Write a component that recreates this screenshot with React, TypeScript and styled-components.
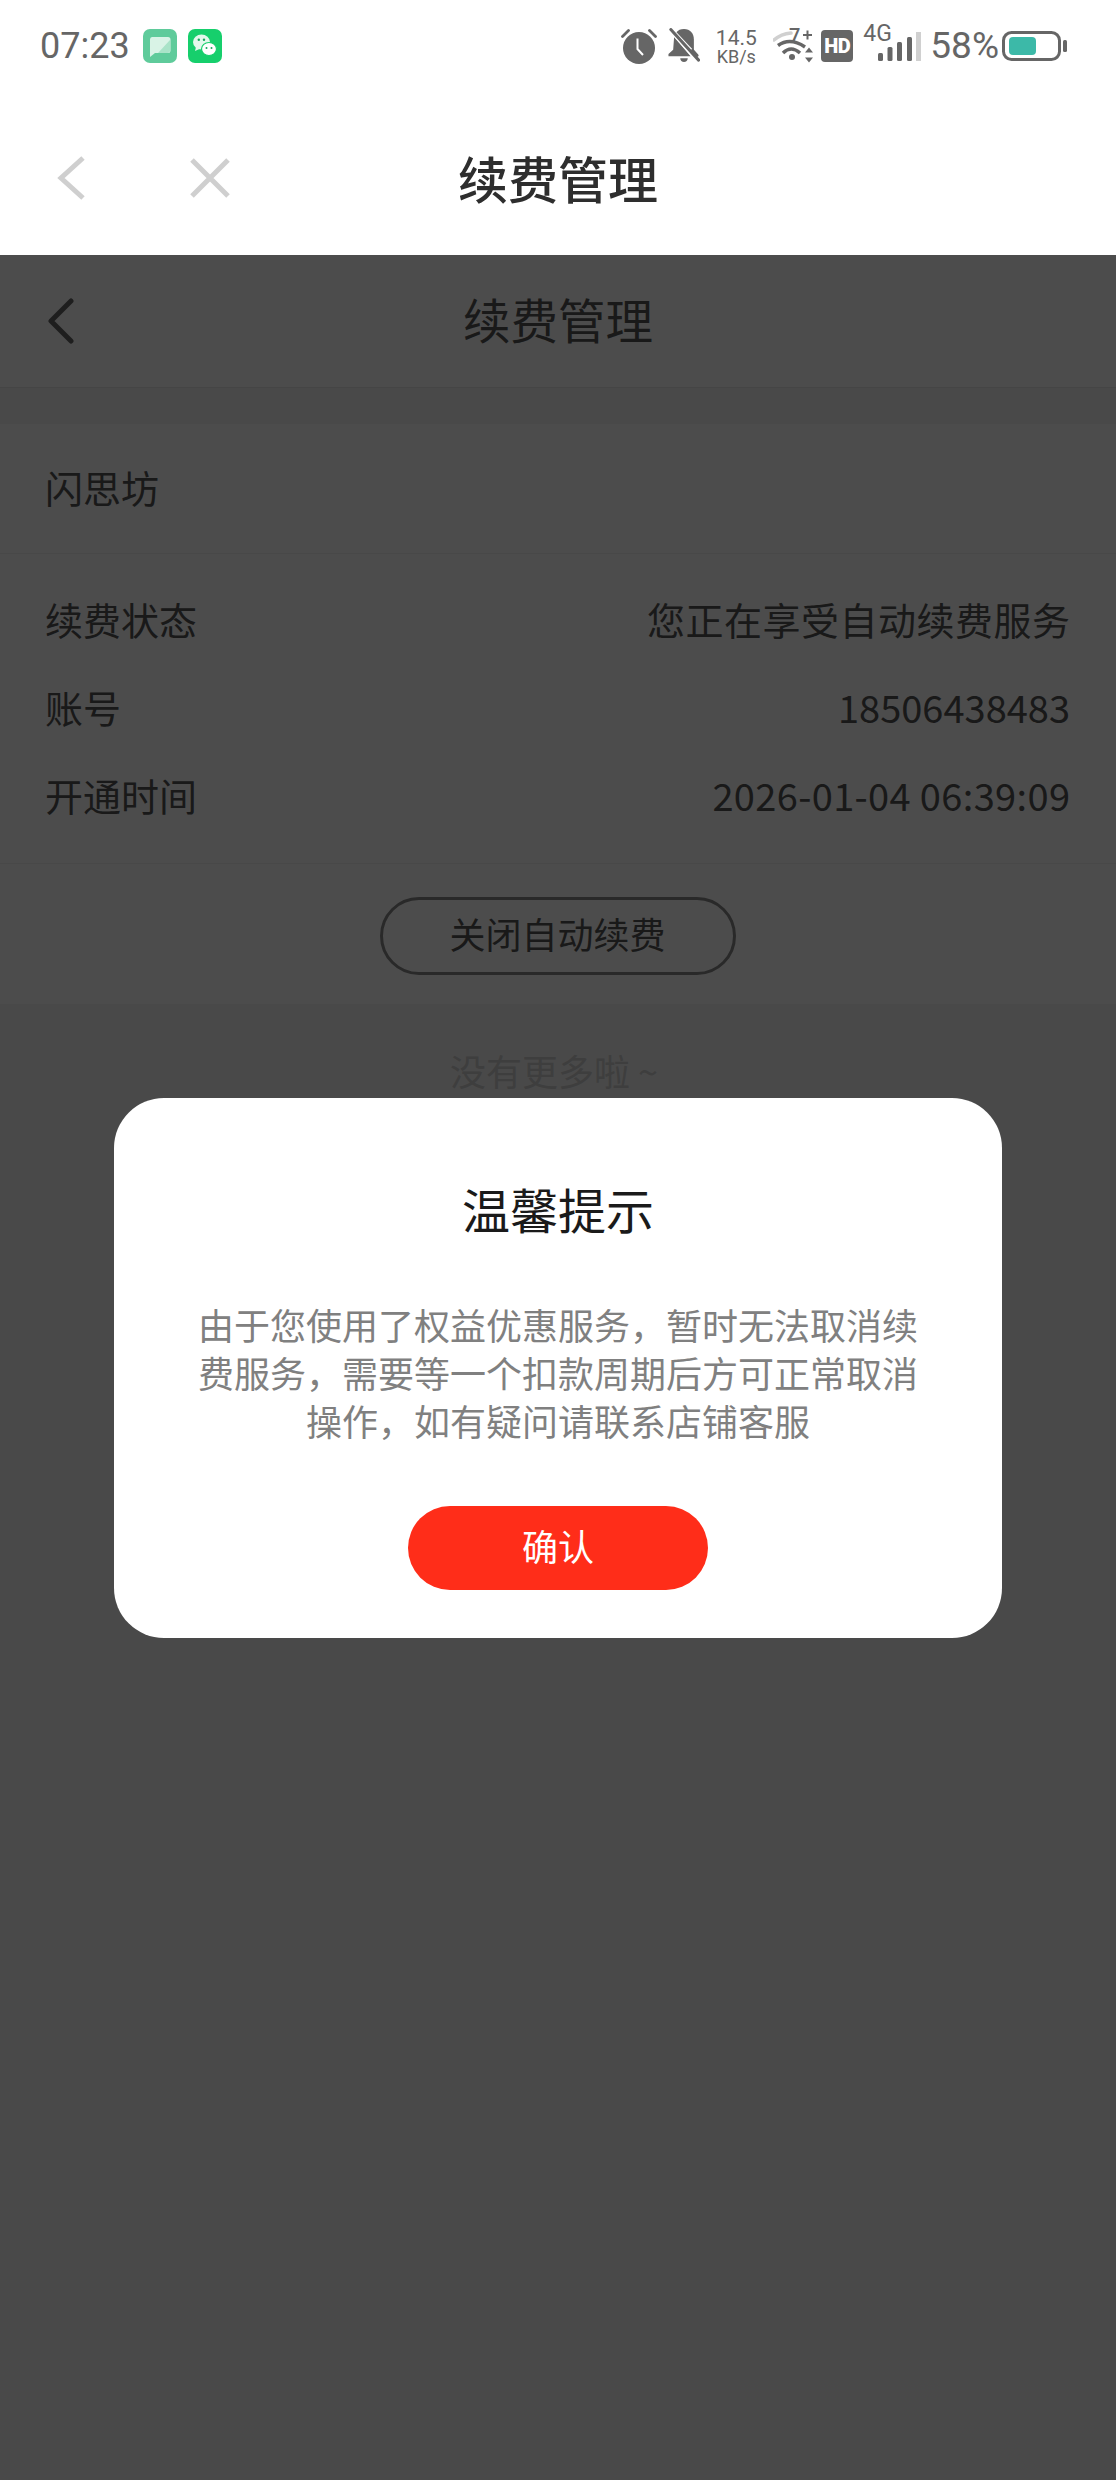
import React from 'react';
import styled, { createGlobalStyle } from 'styled-components';

const GlobalStyle = createGlobalStyle`
  html, body {
    margin: 0;
    padding: 0;
    background: #fff;
  }
  * {
    box-sizing: border-box;
  }
`;

const Screen = styled.div`
  width: 1116px;
  height: 2480px;
  display: flex;
  flex-direction: column;
  overflow: hidden;
  background: #fff;
  font-family: 'Noto Sans CJK SC', 'Noto Sans', sans-serif;
`;

const StatusBar = styled.div`
  height: 100px;
  flex: none;
  display: flex;
  justify-content: space-between;
  align-items: center;
  padding: 0 48px 8px 40px;
  color: #666;
  font-family: Roboto, sans-serif;
  font-weight: 400;
`;

const StatusGroup = styled.div`
  display: flex;
  align-items: center;
`;

const Clock = styled.span`
  font-size: 36px;
  line-height: 40px;
  margin-right: 13px;
`;

const StatusSlot = styled.div<{ $left?: number }>`
  display: flex;
  align-items: center;
  margin-left: ${(p) => p.$left ?? 0}px;
`;

const NetSpeed = styled.div`
  width: 40px;
  display: flex;
  flex-direction: column;
  align-items: center;
  color: #666;
`;

const NetValue = styled.span`
  font-size: 21px;
  line-height: 20px;
`;

const NetUnit = styled.span`
  font-size: 18px;
  line-height: 17px;
  white-space: nowrap;
`;

const HdBadge = styled.span`
  width: 32px;
  height: 32px;
  border-radius: 4px;
  background: #666;
  color: #fff;
  display: flex;
  align-items: center;
  justify-content: center;
  font-size: 20px;
  font-weight: 900;
  letter-spacing: -0.5px;
`;

const SignalWrap = styled.div`
  position: relative;
  width: 58px;
  height: 30px;
  display: flex;
  justify-content: flex-end;
  align-items: flex-end;
`;

const NetType = styled.span`
  position: absolute;
  left: 0;
  top: -8px;
  font-size: 23px;
  line-height: 22px;
`;

const Percent = styled.span`
  font-size: 37px;
  line-height: 40px;
`;

const NavBar = styled.div`
  height: 155px;
  flex: none;
  display: grid;
  grid-template-columns: 1fr auto 1fr;
  align-items: center;
`;

const NavIcons = styled.div`
  display: flex;
  align-items: center;
  gap: 105px;
  padding-left: 57px;
`;

const NavTitle = styled.div`
  font-size: 50px;
  line-height: 60px;
  font-weight: 500;
  color: #2e2e2e;
  padding-bottom: 2px;
`;

const Page = styled.div`
  position: relative;
  flex: 1;
  background: #f5f5f5;
`;

const PageHeader = styled.div`
  height: 133px;
  display: grid;
  grid-template-columns: 1fr auto 1fr;
  align-items: center;
  background: #fff;
  border-bottom: 1px solid #e8e8e8;
`;

const PageBack = styled.div`
  padding-left: 48px;
`;

const PageTitle = styled.div`
  font-size: 47.5px;
  line-height: 60px;
  color: #555;
  padding-bottom: 5px;
`;

const Strip = styled.div`
  height: 36px;
`;

const Section = styled.div<{ $height: number }>`
  height: ${(p) => p.$height}px;
  background: #fff;
  border-bottom: 1px solid #f0f0f0;
  padding: 0 46px 0 45px;
  display: flex;
  flex-direction: column;
  justify-content: center;
`;

const ActionSection = styled(Section)`
  align-items: center;
  padding-top: 3px;
  border-bottom: none;
`;

const Row = styled.div`
  height: 88px;
  display: flex;
  justify-content: space-between;
  align-items: center;
  font-size: 38px;
  color: #555;
  padding-bottom: 5px;
`;

const RowValue = styled.span<{ $spacing: number }>`
  letter-spacing: ${(p) => p.$spacing}px;
  margin-right: ${(p) => -p.$spacing}px;
`;

const ShopName = styled.div`
  font-size: 38px;
  color: #555;
  padding-bottom: 5px;
`;

const OutlineButton = styled.div`
  width: 356px;
  height: 78px;
  border: 3px solid #8a8a8a;
  border-radius: 39px;
  display: flex;
  align-items: center;
  justify-content: center;
  font-size: 36px;
  color: #555;
  padding-bottom: 5px;
`;

const NoMore = styled.div`
  margin-top: 41px;
  padding-right: 8px;
  text-align: center;
  font-size: 36px;
  line-height: 50px;
  color: #cfcfcf;
`;

const Overlay = styled.div`
  position: absolute;
  inset: 0;
  background: rgba(0, 0, 0, 0.7);
  display: flex;
  align-items: center;
  justify-content: center;
`;

const Modal = styled.div`
  width: 888px;
  height: 540px;
  background: #fff;
  border-radius: 50px;
  padding: 80px 82px 0;
  display: flex;
  flex-direction: column;
  align-items: center;
`;

const ModalTitle = styled.div`
  font-size: 48px;
  line-height: 60px;
  color: #1a1a1a;
`;

const ModalBody = styled.div`
  margin-top: 62px;
  font-size: 36px;
  line-height: 48px;
  text-align: center;
  color: #808080;
`;

const ConfirmButton = styled.div`
  margin-top: 62px;
  width: 300px;
  height: 84px;
  border-radius: 42px;
  background: #ff2d19;
  color: #fff;
  display: flex;
  align-items: center;
  justify-content: center;
  font-size: 36px;
  padding-bottom: 5px;
`;

const MessageIcon = () => (
  <svg width="34" height="34" viewBox="0 0 34 34">
    <rect width="34" height="34" rx="7" fill="#5fcb9b" />
    <path d="M9 8h16a2.500 2.500 0 0 1 2.500 2.500v11a2.500 2.500 0 0 1-2.500 2.500H12l-5 4V10.500A2.500 2.500 0 0 1 9 8z" fill="#d9f3e6" />
    <path d="M27 11v10.500a2.500 2.500 0 0 1-2.500 2.500H15z" fill="#a9e3c8" />
  </svg>
);

const WechatIcon = () => (
  <svg width="34" height="34" viewBox="0 0 34 34">
    <rect width="34" height="34" rx="7" fill="#16cf6c" />
    <ellipse cx="13.500" cy="13" rx="8.500" ry="7.500" fill="#e3f8ec" />
    <path d="M8 18l-1 4 4.500-2z" fill="#e3f8ec" />
    <ellipse cx="21" cy="20" rx="7.500" ry="6.500" fill="#fff" stroke="#16cf6c" strokeWidth="1.200" />
    <circle cx="10.800" cy="10.800" r="1.200" fill="#16a85c" />
    <circle cx="16" cy="10.800" r="1.200" fill="#16a85c" />
    <circle cx="18.500" cy="19" r="1" fill="#16a85c" />
    <circle cx="23.500" cy="19" r="1" fill="#16a85c" />
  </svg>
);

const AlarmIcon = () => (
  <svg width="36" height="36" viewBox="0 0 36 36">
    <circle cx="18" cy="20" r="16" fill="#666" />
    <path d="M16.500 10.500v10.500l5.500 6" fill="none" stroke="#fff" strokeWidth="2" />
    <path d="M1.500 8.500L7.500 2.500M34.500 8.500L28.500 2.500" fill="none" stroke="#666" strokeWidth="2.800" strokeLinecap="round" />
  </svg>
);

const BellOffIcon = () => (
  <svg width="32" height="36" viewBox="0 0 34 36">
    <path d="M17 0c6.500 0 10.500 4.500 10.500 11v12L9 3.500C10.500 1.300 13.500 0 17 0z" fill="#666" />
    <path d="M6.500 8.500l17.500 20.500H0.500l0-2.500 5-4.500z" fill="#666" />
    <path d="M13 31h8c0 2.500-1.800 4-4 4s-4-1.500-4-4z" fill="#666" />
    <path d="M26 22.500l5 5.500" fill="none" stroke="#666" strokeWidth="3" strokeLinecap="round" />
    <path d="M2 1l30 34" fill="none" stroke="#fff" strokeWidth="3" />
    <path d="M3 0.500l29.500 32.500" fill="none" stroke="#666" strokeWidth="3.200" strokeLinecap="round" />
  </svg>
);

const WifiIcon = () => (
  <svg width="40" height="50" viewBox="0 -6 40 50">
    <path d="M1 13Q8 7 18 6" fill="none" stroke="#d0d0d0" strokeWidth="3.500" strokeLinecap="round" />
    <path d="M5 18.500Q17 10 32 20" fill="none" stroke="#666" strokeWidth="3.500" />
    <path d="M10 26Q18 18 27 26" fill="none" stroke="#666" strokeWidth="3.500" />
    <circle cx="19" cy="30" r="3" fill="#666" />
    <text x="16" y="16" fontFamily="Roboto, sans-serif" fontSize="20" fontWeight="500" fill="#666">7</text>
    <path d="M30 8h9M34.500 3.500v9" fill="none" stroke="#666" strokeWidth="2" />
    <path d="M36 20.500l4 5h-8zM36 35.500l-4-5h8z" fill="#666" />
  </svg>
);

const SignalBars = () => (
  <svg width="43" height="29" viewBox="0 0 43 29">
    <rect x="0" y="21" width="5" height="8" rx="1.500" fill="#666" />
    <rect x="9.500" y="15" width="5" height="14" rx="1.500" fill="#666" />
    <rect x="19" y="10" width="5" height="19" rx="1.500" fill="#666" />
    <rect x="29" y="5" width="5" height="24" rx="1.500" fill="#666" />
    <rect x="38" y="0" width="5" height="29" fill="#d0d0d0" />
  </svg>
);

const BatteryIcon = () => (
  <svg width="66" height="30" viewBox="0 0 66 30">
    <rect x="1.500" y="1.500" width="56" height="27" rx="8" fill="none" stroke="#666" strokeWidth="3" />
    <rect x="7" y="6" width="27" height="18" rx="4" fill="#3cb9a8" />
    <rect x="61" y="9" width="4" height="12" rx="1.500" fill="#666" />
  </svg>
);

const NavBackIcon = () => (
  <svg width="28" height="44" viewBox="0 0 28 44" style={{ display: 'block' }}>
    <path d="M26 2L4 22l22 20" fill="none" stroke="#cfcfcf" strokeWidth="5" />
  </svg>
);

const NavCloseIcon = () => (
  <svg width="40" height="40" viewBox="0 0 40 40" style={{ display: 'block' }}>
    <path d="M2 2l36 36M38 2L2 38" fill="none" stroke="#cfcfcf" strokeWidth="5" />
  </svg>
);

const PageBackIcon = () => (
  <svg width="26" height="46" viewBox="0 0 26 46" style={{ display: 'block' }}>
    <path d="M23 3L3 23l20 20" fill="none" stroke="#666" strokeWidth="5" strokeLinecap="round" strokeLinejoin="round" />
  </svg>
);

const rows = [
  { label: '续费状态', value: '您正在享受自动续费服务', spacing: 0.5 },
  { label: '账号', value: '18506438483', spacing: 0 },
  { label: '开通时间', value: '2026-01-04 06:39:09', spacing: 0.35 },
];

export default function App() {
  return (
    <Screen>
      <GlobalStyle />
      <StatusBar>
        <StatusGroup>
          <Clock>07:23</Clock>
          <MessageIcon />
          <StatusSlot $left={11}>
            <WechatIcon />
          </StatusSlot>
        </StatusGroup>
        <StatusGroup>
          <AlarmIcon />
          <StatusSlot $left={11}>
            <BellOffIcon />
          </StatusSlot>
          <StatusSlot $left={16}>
            <NetSpeed>
              <NetValue>14.5</NetValue>
              <NetUnit>KB/s</NetUnit>
            </NetSpeed>
          </StatusSlot>
          <StatusSlot $left={17}>
            <WifiIcon />
          </StatusSlot>
          <StatusSlot $left={8}>
            <HdBadge>HD</HdBadge>
          </StatusSlot>
          <StatusSlot $left={10}>
            <SignalWrap>
              <NetType>4G</NetType>
              <SignalBars />
            </SignalWrap>
          </StatusSlot>
          <StatusSlot $left={9}>
            <Percent>58%</Percent>
          </StatusSlot>
          <StatusSlot $left={3}>
            <BatteryIcon />
          </StatusSlot>
        </StatusGroup>
      </StatusBar>
      <NavBar>
        <NavIcons>
          <NavBackIcon />
          <NavCloseIcon />
        </NavIcons>
        <NavTitle>续费管理</NavTitle>
      </NavBar>
      <Page>
        <PageHeader>
          <PageBack>
            <PageBackIcon />
          </PageBack>
          <PageTitle>续费管理</PageTitle>
        </PageHeader>
        <Strip />
        <Section $height={130}>
          <ShopName>闪思坊</ShopName>
        </Section>
        <Section $height={310}>
          {rows.map((row) => (
            <Row key={row.label}>
              <span>{row.label}</span>
              <RowValue $spacing={row.spacing}>{row.value}</RowValue>
            </Row>
          ))}
        </Section>
        <ActionSection $height={140}>
          <OutlineButton>关闭自动续费</OutlineButton>
        </ActionSection>
        <NoMore>没有更多啦 ~</NoMore>
        <Overlay>
          <Modal>
            <ModalTitle>温馨提示</ModalTitle>
            <ModalBody>
              由于您使用了权益优惠服务，暂时无法取消续费服务，需要等一个扣款周期后方可正常取消操作，如有疑问请联系店铺客服
            </ModalBody>
            <ConfirmButton>确认</ConfirmButton>
          </Modal>
        </Overlay>
      </Page>
    </Screen>
  );
}
